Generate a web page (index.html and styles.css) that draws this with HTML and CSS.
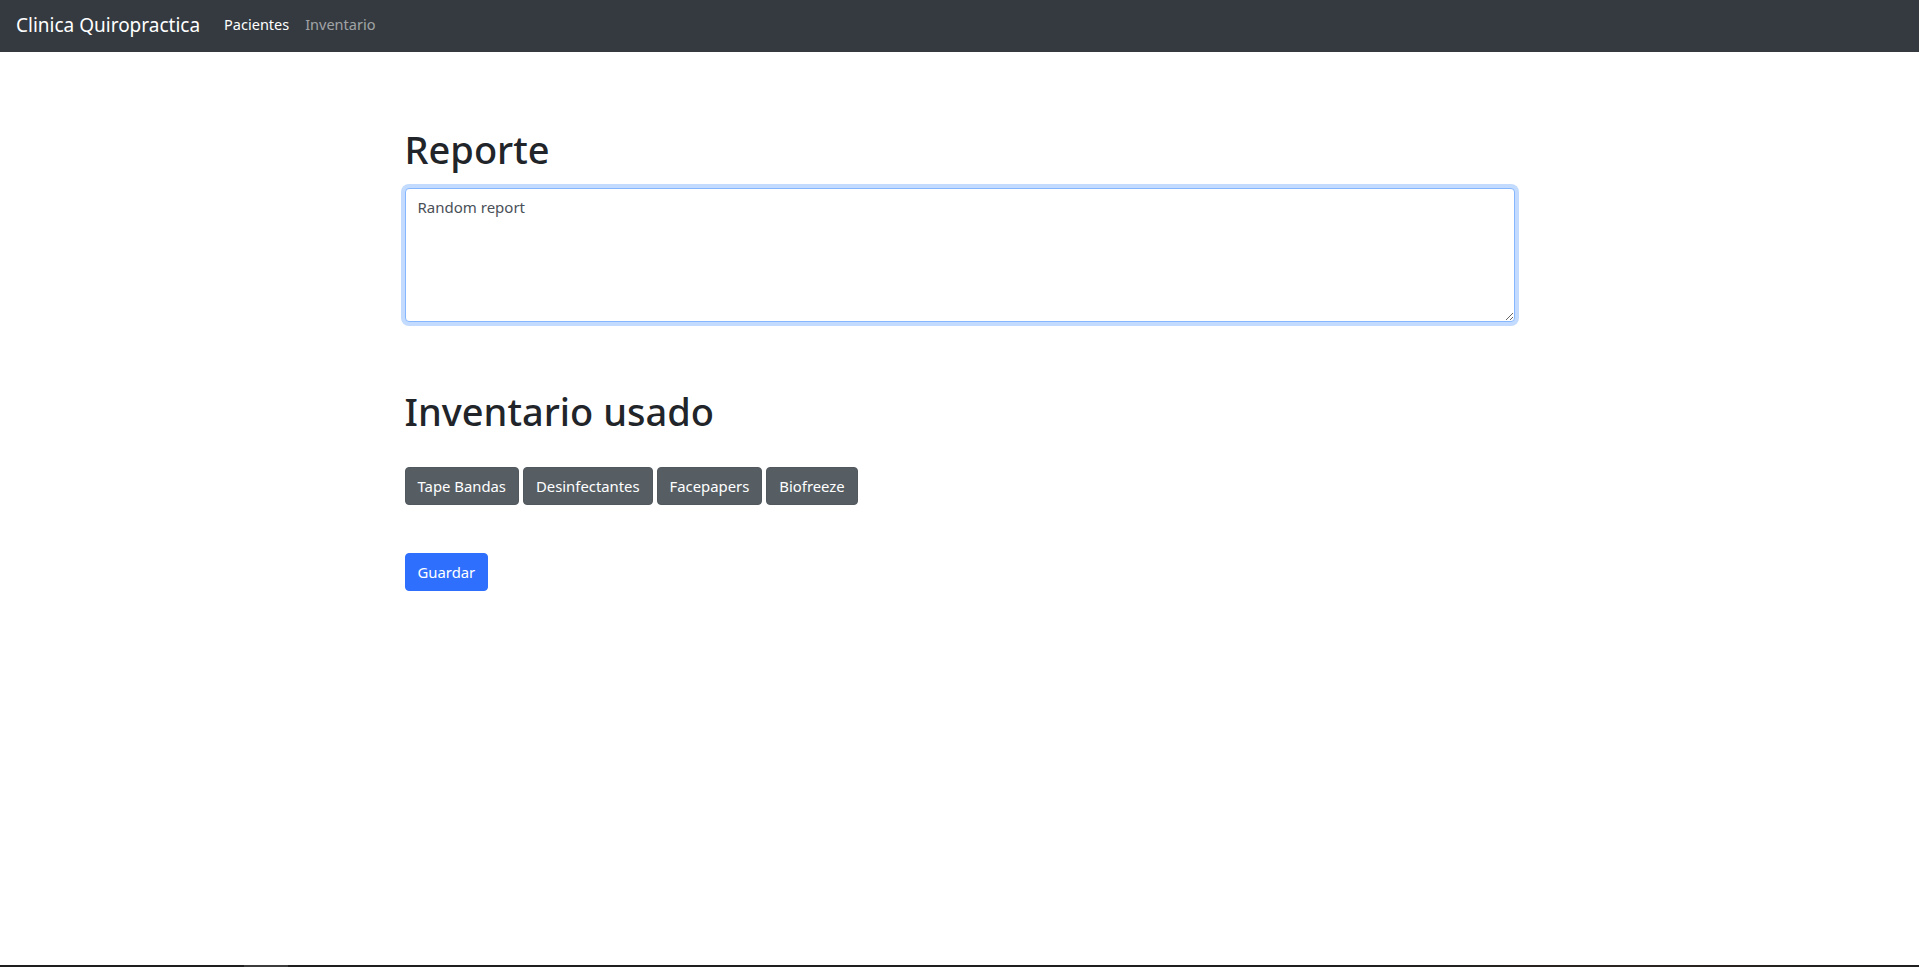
FILE: index.html
```html
<!DOCTYPE html>
<html lang="es">
<head>
<meta charset="utf-8">
<title>Clinica Quiropractica</title>
<link rel="stylesheet" href="styles.css">
</head>
<body>
<nav class="navbar">
  <a class="brand" href="#">Clinica Quiropractica</a>
  <ul class="nav">
    <li><a class="nav-link active" href="#">Pacientes</a></li>
    <li><a class="nav-link" href="#">Inventario</a></li>
  </ul>
</nav>
<main class="container">
  <section class="section report">
    <h1 class="title">Reporte</h1>
    <textarea class="form-control" rows="5">Random report</textarea>
  </section>
  <section class="section inventory">
    <h1 class="title">Inventario usado</h1>
    <div class="btn-row">
      <button class="btn btn-secondary" type="button">Tape Bandas</button>
      <button class="btn btn-secondary" type="button">Desinfectantes</button>
      <button class="btn btn-secondary" type="button">Facepapers</button>
      <button class="btn btn-secondary" type="button">Biofreeze</button>
    </div>
  </section>
  <div class="actions">
    <button class="btn btn-primary" type="button">Guardar</button>
  </div>
</main>
<div class="taskbar-edge"><span class="edge-patch"></span></div>
</body>
</html>
```
FILE: styles.css
```css
* {
  box-sizing: border-box;
}

html, body {
  margin: 0;
  padding: 0;
  background: #ffffff;
}

body {
  font-family: "Noto Sans", "Open Sans", "Liberation Sans", sans-serif;
  font-size: 16px;
  line-height: 1.5;
  color: #212529;
  min-height: 967px;
}

.navbar {
  display: flex;
  align-items: center;
  height: 52px;
  padding: 0 16px;
  background: #343a40;
}

.brand {
  font-size: 19px;
  line-height: 30px;
  color: #ffffff;
  text-decoration: none;
  margin-right: 16px;
  padding-bottom: 2px;
}

.nav {
  display: flex;
  list-style: none;
  margin: 0;
  padding: 0;
}

.nav-link {
  display: block;
  padding: 6px 8px 10px;
  font-size: 14.5px;
  line-height: 24px;
  color: rgba(255, 255, 255, 0.55);
  text-decoration: none;
}

.nav-link.active {
  color: #ffffff;
}

.container {
  width: 1140px;
  margin: 0 auto;
  padding: 0 15px;
}

.title {
  margin: 0;
  font-size: 38px;
  font-weight: 500;
  line-height: 48px;
  color: #212529;
}

.report {
  padding-top: 73px;
}

.report .title {
  margin-bottom: 15px;
}

.form-control {
  display: block;
  width: 100%;
  height: 134px;
  padding: 6px 12px;
  font-family: inherit;
  font-size: 15px;
  line-height: 24px;
  color: #495057;
  background: #ffffff;
  border: 1px solid #86b7fe;
  border-radius: 4px;
  box-shadow: 0 0 0 4px rgba(13, 110, 253, 0.25);
  outline: none;
  resize: vertical;
}

.inventory {
  padding-top: 65px;
}

.inventory .title {
  margin-bottom: 32px;
}

.btn-row {
  display: flex;
  gap: 4px;
}

.btn {
  display: inline-block;
  height: 38px;
  padding: 6px 12px;
  font-family: inherit;
  font-size: 14.85px;
  line-height: 24px;
  color: #ffffff;
  border: 1px solid transparent;
  border-radius: 4px;
  cursor: pointer;
}

.btn-secondary {
  background: #565e64;
  border-color: #51585e;
}

.btn-primary {
  background: #2f6ffd;
  border-color: #2f6ffd;
}

.actions {
  padding-top: 48px;
}

.taskbar-edge {
  position: fixed;
  left: 0;
  right: 0;
  bottom: 0;
  height: 2px;
  background: linear-gradient(90deg, #1e1e1e 0%, #1f1f1f 70%, #2a2520 85%, #1f1f1f 100%);
}

.edge-patch {
  position: absolute;
  left: 244px;
  width: 44px;
  top: 0;
  bottom: 0;
  background: #3c3c3c;
}
```
